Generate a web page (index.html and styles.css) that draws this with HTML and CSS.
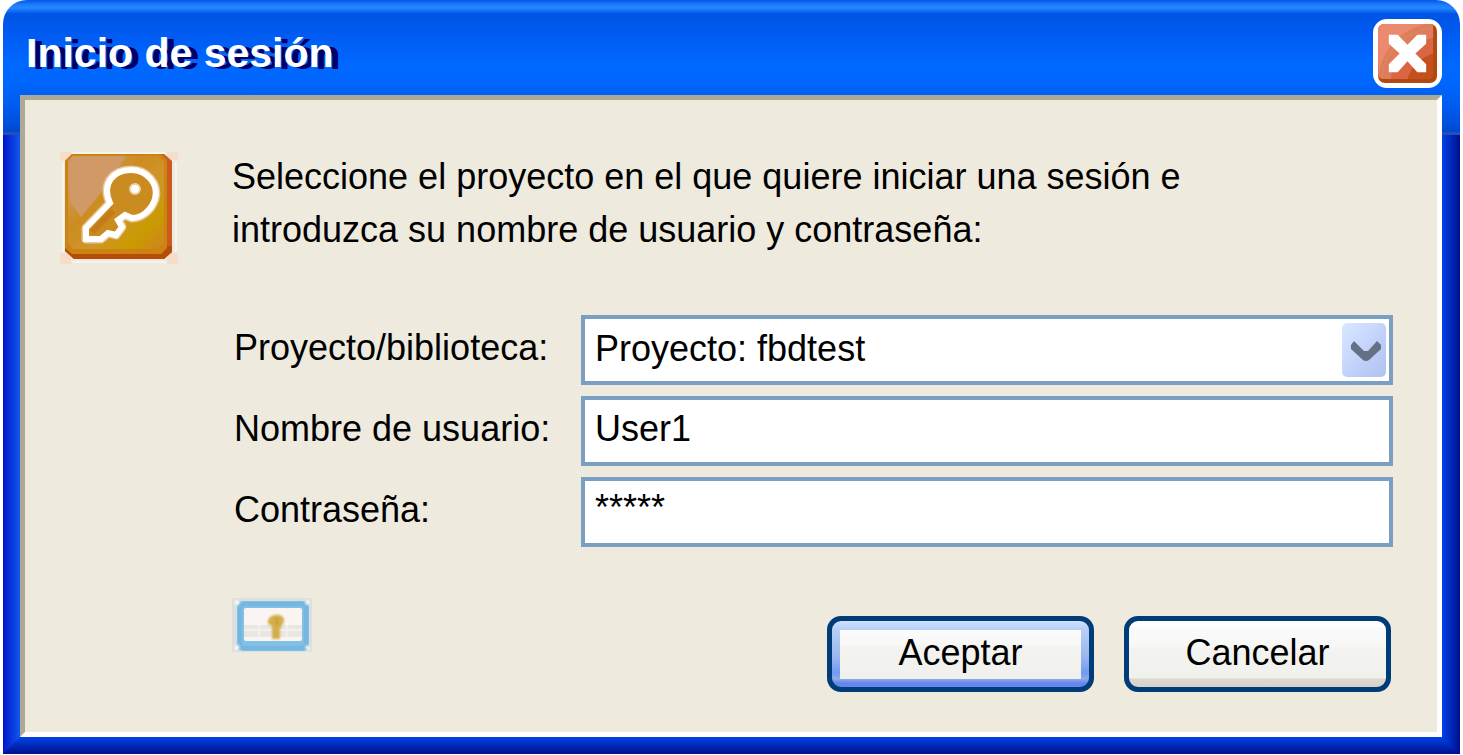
FILE: index.html
```html
<!DOCTYPE html>
<html lang="es">
<head>
    <meta charset="UTF-8">
    <meta name="viewport" content="width=device-width, initial-scale=1.0">
    <title>Inicio de sesión</title>
    <link rel="stylesheet" href="styles.css">
</head>
<body>
    <div class="window">
        <header class="title-bar">
            <h1>Inicio de sesión</h1>
            <button type="button" class="close" aria-label="Cerrar">
                <svg viewBox="0 0 60 60" aria-hidden="true">
                    <rect width="60" height="60" rx="7" fill="#b04a10"/>
                    <rect width="56" height="56" rx="6" fill="#da6544"/>
                    <path d="M7 0H56V14C40 18 16 30 13 56H6Q0 56 0 50V7Q0 0 7 0Z" fill="#e37a5e"/>
                    <path d="M7 0H48C24 6 5 24 1 50L0 7Q0 0 7 0Z" fill="#ec8a70"/>
                    <path d="M56 30C44 34 34 42 30 56H50Q56 56 56 50Z" fill="#c5501c"/>
                    <path d="M4 55C6 28 26 8 55 4" fill="none" stroke="#cf8a58" stroke-width="2"/>
                    <path d="M11 11H20L30 21L40 11H49V20L38 30L49 41V49H40L30 38L20 49H11V41L22 30L11 20Z" fill="#fff"/>
                </svg>
            </button>
        </header>

        <form class="content" id="loginForm">
            <svg class="key-icon" viewBox="0 0 118 112" aria-hidden="true">
                <defs>
                    <linearGradient id="gold" x1="0" y1="0" x2="1" y2="1">
                        <stop offset="0.15" stop-color="#d09860"/>
                        <stop offset="0.4" stop-color="#cd8c20"/>
                        <stop offset="0.6" stop-color="#cf952a"/>
                        <stop offset="0.8" stop-color="#c99a00"/>
                        <stop offset="1" stop-color="#cf8420"/>
                    </linearGradient>
                </defs>
                <rect width="118" height="112" fill="#f5ddca"/>
                <path d="M11 0H107V8H118V101H107V112H11V101H0V8H11Z" fill="#eeeade"/>
                <path d="M3 10V100M12 110H106M12 1H106M116 10V100" stroke="#f5f4e8" stroke-width="2"/>
                <path d="M12 2H104L112 9V100L104 107H14L5 99V9Z" fill="#cb5a1e"/>
                <path d="M5 94H112V100L104 107H14L5 99Z" fill="#b54c08"/>
                <path d="M12 2H101L107 8V96L101 102H12L5 96V9Z" fill="#cc8312"/>
                <path d="M13 4H98L104 10V92L98 97H13L8 91V9Z" fill="url(#gold)"/>
                <path d="M13 4H66L48 32L21 65L10 50V9Z" fill="#d09965"/>
                <path d="M50 51C41 31 54 18 71 18C87 18 99 32 95 47C91 59 81 66 72 66L65 63L58 68L62 75L56 83L48 81L41 87H26V76Z" fill="#ca8b20" stroke="#e9c99a" stroke-width="9" stroke-linejoin="round"/>
                <path d="M50 51C41 31 54 18 71 18C87 18 99 32 95 47C91 59 81 66 72 66L65 63L58 68L62 75L56 83L48 81L41 87H26V76Z" fill="#ca8b20" stroke="#fff" stroke-width="6"/>
                <circle cx="75" cy="37" r="5" fill="#fff" stroke="#ecd3a5" stroke-width="2"/>
                <path d="M32 80L53 59" stroke="#c77b18" stroke-width="6"/>
            </svg>
            <p class="intro">Seleccione el proyecto en el que quiere iniciar una sesión e introduzca su nombre de usuario y contraseña:</p>

            <div class="fields">
                <label for="project">Proyecto/biblioteca:</label>
                <div class="select-box">
                    <select id="project" name="project">
                        <option>Proyecto: fbdtest</option>
                    </select>
                    <svg class="arrow" viewBox="0 0 44 54" aria-hidden="true">
                        <defs>
                            <linearGradient id="arrowFill" x1="0" y1="0" x2="1" y2="1">
                                <stop offset="0" stop-color="#dbe7ff"/>
                                <stop offset="0.3" stop-color="#cddcff"/>
                                <stop offset="0.65" stop-color="#bccdf7"/>
                                <stop offset="1" stop-color="#b0c2f0"/>
                            </linearGradient>
                        </defs>
                        <rect width="44" height="54" rx="5" fill="url(#arrowFill)"/>
                        <path d="M9 22L12 18L22 28H26L35 18L39 22V26L27 37Q24 39 21 37L9 26Z" fill="#667085"/>
                    </svg>
                </div>

                <label for="user">Nombre de usuario:</label>
                <input type="text" id="user" name="user" value="User1">

                <label for="password">Contraseña:</label>
                <input type="text" id="password" name="password" value="*****" autocomplete="off" class="masked">
            </div>

            <div class="actions">
                <svg class="language-icon" viewBox="0 0 80 54" aria-hidden="true">
                    <defs>
                        <filter id="soft"><feGaussianBlur stdDeviation="1"/></filter>
                    </defs>
                    <rect width="80" height="54" fill="#dedede"/>
                    <rect x="5" y="3" width="72" height="50" rx="6" fill="#82c0e5"/>
                    <rect x="8" y="6" width="66" height="44" rx="5" fill="none" stroke="#74b7e1" stroke-width="4"/>
                    <rect x="12" y="10" width="58" height="33" rx="2" fill="#faf5f3"/>
                    <path d="M12 27H70V39H12Z" fill="#e9e7e4"/>
                    <path d="M12 32H70M27 27V39M55 27V39" stroke="#f4efe9" stroke-width="2"/>
                    <path d="M36 26C34 15 52 14 52 22C52 27 48 28 48 32V41H40V28Z" fill="#d5ad4c" filter="url(#soft)"/>
                    <path d="M43 20L46 22L44 27" fill="none" stroke="#c99a3c" stroke-width="2" filter="url(#soft)"/>
                    <path d="M3 3L7 6M77 3L74 6M3 51L7 48M77 51L74 48" stroke="#fff" stroke-width="3" filter="url(#soft)"/>
                </svg>
                <button type="submit" class="btn btn-default">Aceptar</button>
                <button type="button" class="btn">Cancelar</button>
            </div>
        </form>
        <div class="frame-bottom"></div>
    </div>

    <script>
        const loginForm = document.getElementById('loginForm');

        loginForm.addEventListener('submit', (e) => {
            e.preventDefault();
        });
    </script>
</body>
</html>
```
FILE: styles.css
```css
* {
    box-sizing: border-box;
}

body {
    margin: 0;
    background-color: #fff;
    color: #000;
    font-family: "Liberation Sans", Arial, sans-serif;
    font-size: 36px;
    line-height: 53px;
}

.window {
    margin: 0 3px;
    border-radius: 24px 24px 0 0;
    overflow: hidden;
    background:
        linear-gradient(#0058ea 0, #1f7dff 5px, #2687ff 8px, #0b66f4 12px, #0054e5 14px, #005af0 32px, #0068ff 64px, #0068ff 78px, #005cf0 105px, #0050dc 124px, #0046d0 132px, #2050b8 132px, #2050b8 135px) top / 100% 135px no-repeat,
        linear-gradient(to right, #0016c8, #1257ef) left / 17px 100% no-repeat,
        linear-gradient(to right, #0040e8, #00108c) right / 18px 100% no-repeat;
}

.title-bar {
    display: flex;
    align-items: center;
    justify-content: space-between;
    height: 95px;
    padding: 12px 18px 0 23px;
}

h1 {
    margin: 0;
    color: #fff;
    font-size: 41px;
    font-weight: bold;
    text-shadow: 7px 2px #000066;
}

.close {
    width: 69px;
    height: 69px;
    padding: 0;
    border: 5px solid #fff;
    border-radius: 14px;
    background-color: #fff;
    cursor: pointer;
}

.close svg {
    display: block;
}

.content {
    display: grid;
    grid-template-columns: 118px 1fr;
    column-gap: 54px;
    margin: 0 18px 0 17px;
    padding: 50px 44px 40px 35px;
    border: 5px solid #fff;
    border-top-color: #aea896;
    border-left-color: #aea896;
    background-color: #eeeade;
}

.key-icon {
    width: 118px;
    height: 112px;
    margin-top: 2px;
}

.intro {
    max-width: 1000px;
    margin: 0;
}

.fields {
    display: grid;
    grid-column: 2;
    grid-template-columns: 338px 1fr;
    grid-auto-rows: 70px;
    gap: 11px;
    margin-top: 51px;
}

label {
    padding: 6px 2px;
    white-space: nowrap;
}

input,
select {
    width: 100%;
    height: 70px;
    margin: 0;
    padding: 0 10px 4px;
    border: 4px solid #7a9fc3;
    border-radius: 0;
    background-color: #fff;
    color: #000;
    font: inherit;
}

select {
    appearance: none;
}

.masked {
    padding-bottom: 8px;
}

.select-box {
    position: relative;
}

.arrow {
    position: absolute;
    top: 8px;
    right: 7px;
    width: 44px;
    height: 54px;
    pointer-events: none;
}

.actions {
    display: flex;
    grid-column: 2;
    gap: 30px;
    margin-top: 51px;
    padding-right: 2px;
}

.language-icon {
    width: 80px;
    height: 54px;
    margin-right: auto;
}

.btn {
    width: 267px;
    height: 76px;
    margin-top: 18px;
    padding: 0 0 4px;
    border: 5px solid #003c78;
    border-radius: 14px;
    background: linear-gradient(#fff 0, #fff 6px, #fafafa 7px, #f8f7f6 26px, #f3f3f1 27px, #f0f0ec 57px, #ddd8d0 58px, #d8d3ca 66px);
    color: #000;
    font: inherit;
    cursor: pointer;
}

.btn-default {
    background:
        linear-gradient(#fcfcfc, #f7f6f5 32%, #f3f3f1 34%, #f0f0ec) center / calc(100% - 16px) 49px no-repeat,
        linear-gradient(#cfe0ff, #b5cff5 9px, #9bb8ef 35px, #729af2 52px, #8daee8 58px, #6685ee 62px, #6685ee);
}

.frame-bottom {
    height: 17px;
    background: linear-gradient(#0042e8, #00108c);
    clip-path: polygon(17px 0, calc(100% - 18px) 0, 100% 100%, 0 100%);
}
```
